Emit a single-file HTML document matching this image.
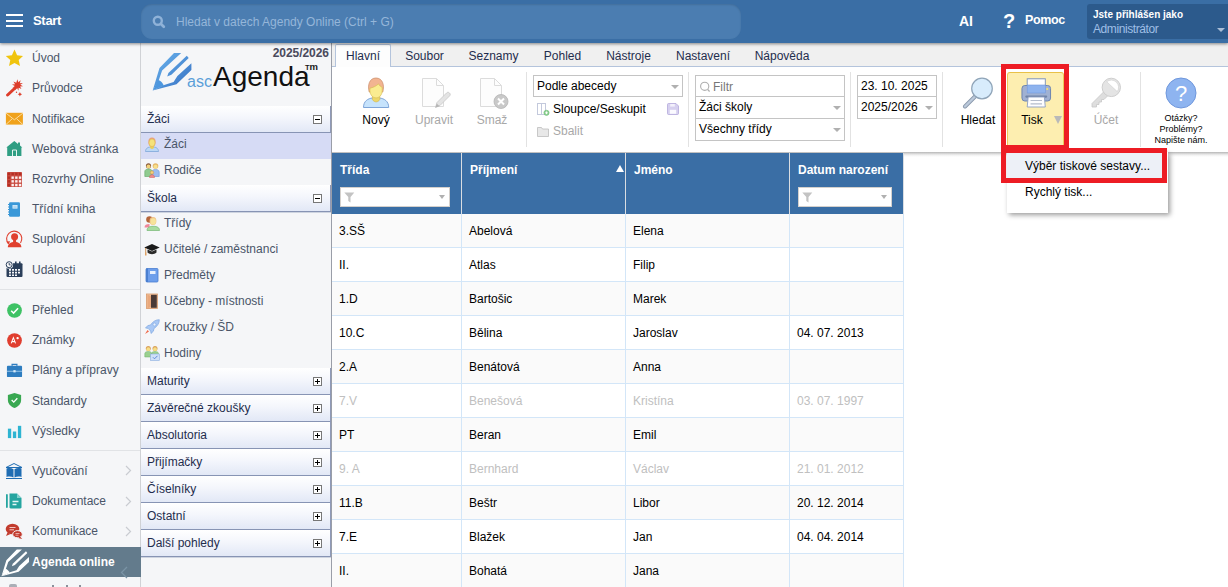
<!DOCTYPE html>
<html><head><meta charset="utf-8">
<style>
*{box-sizing:border-box;margin:0;padding:0}
html,body{width:1228px;height:587px;overflow:hidden;background:#fff;font-family:"Liberation Sans",sans-serif;}
body{position:relative}
.abs{position:absolute}
#top{position:absolute;left:0;top:0;width:1228px;height:43px;background:#3a6ea5;z-index:20;box-shadow:0 1px 3px rgba(0,0,0,.45)}
#top .start{position:absolute;left:33px;top:13px;color:#fff;font-size:13px;font-weight:bold;letter-spacing:-0.3px}
#top .ham{position:absolute;left:6px;top:14px;width:17px;height:13px}
#top .ham i{display:block;height:2px;background:#fff;margin-bottom:3.5px}
#search{position:absolute;left:141px;top:4px;width:600px;height:35px;border-radius:11px;background:#4b7db1;box-shadow:inset 0 1px 2px rgba(0,0,0,.12)}
#search span{position:absolute;left:35px;top:11px;font-size:12px;color:#95b6d9;white-space:nowrap}
#user{position:absolute;left:1087px;top:4px;width:141px;height:35px;background:#2c5a8c;border-radius:3px 0 0 3px}
#side{position:absolute;left:0;top:43px;width:140px;height:544px;background:#f5f6f8}
#side .it{position:absolute;left:32px;font-size:12px;color:#4a5568;white-space:nowrap}
#side .sep{position:absolute;left:0;width:140px;height:1px;background:#e1e3e6}
#nav{position:absolute;left:140px;top:43px;width:192px;height:544px;background:#f5f6f8;border-left:1px solid #d0d2d6;border-right:1px solid #9a9ea8}
.sec{position:absolute;left:0;width:190px;height:27px;background:linear-gradient(#ffffff,#f4f6fc 45%,#e2e8f6);border-bottom:1px solid #8794b4;border-right:1px solid #8f9ab8;box-shadow:0 1px 0 rgba(135,148,180,.35);font-size:12px;color:#1f2d4d;padding:6px 0 0 6px}
.sec b{position:absolute;right:8px;top:9px;width:9px;height:9px;border:1px solid #777;background:#fff}
.sec b:before{content:"";position:absolute;left:1px;top:3px;width:5px;height:1px;background:#000}
.sec b.p:after{content:"";position:absolute;left:3px;top:1px;width:1px;height:5px;background:#000}
.ni{position:absolute;left:0;width:190px;height:26px;font-size:12px;color:#4a5568;padding:4px 0 0 23px;white-space:nowrap}
#side .ic{position:absolute;left:5px;width:18px;height:18px}
#side .chev{position:absolute;left:125px}
#side .act{position:absolute;left:0;top:504px;width:141px;z-index:5;height:29.500px;background:#637b8c}
#side .act span{position:absolute;left:32px;top:8px;font-size:12px;font-weight:bold;color:#fff;white-space:nowrap}
.ni.sel{background:#d6dbf5}
.nic{position:absolute;left:3px;top:3px;width:16px;height:16px}
#nav .yr{position:absolute;right:2px;top:3px;font-size:12px;font-weight:bold;color:#4a4a5c;letter-spacing:-0.05px}
#nav .logo{position:absolute;left:7px;top:5px}
#nav .asc{position:absolute;left:46px;top:30px;font-size:16px;color:#5b9fd8}
#nav .agenda{position:absolute;left:72px;top:18px;font-size:28px;color:#111}
#nav .tm{position:absolute;left:164px;top:18px;font-size:9px;font-weight:bold;color:#1a1a1a;letter-spacing:0;line-height:12px;white-space:nowrap}
#main{position:absolute;left:332px;top:43px;width:896px;height:544px;background:#fff}
#tabs{position:absolute;left:0;top:0;width:896px;height:24px;background:#f0f0f0;border-bottom:1px solid #b4c4dc}
.tab{position:absolute;top:1px;height:23px;text-align:center;font-size:12px;color:#1f2d4d;padding-top:5px}
.tab.act{background:#fdfdfd;border:1px solid #b4c4dc;border-bottom:none;height:24px;padding-top:4px;border-radius:2px 2px 0 0}
#rib{position:absolute;left:0;top:24px;width:896px;height:85px;background:#fff}
#ribsh{position:absolute;left:0;top:109px;width:896px;height:5px;background:linear-gradient(#b6b6b6,#cdcdcd 22%,#e4e4e4 45%,#f4f4f4 70%,#fff)}
.bb{position:absolute;top:0;width:60px;height:84px}
.bb svg{position:absolute}
.bb span{position:absolute;left:0;width:60px;top:46px;text-align:center;font-size:12px}
.vs{position:absolute;top:5px;width:1px;height:75px;background:#e2e2e2}
.box{position:absolute;border:1px solid #c4c4c4;background:#fff}
.box .t{position:absolute;left:3px;top:3px;font-size:12px;color:#000;white-space:nowrap}
.box .dd{position:absolute;right:3px;top:9px;width:0;height:0;border-left:4px solid transparent;border-right:4px solid transparent;border-top:4px solid #b0b0b0}
.lt{position:absolute;font-size:12px;white-space:nowrap}
.tisk{position:absolute;width:57px;height:76px;background:#fdeeb0;border:1px solid #ecca5c;border-top-color:#e9c148;border-radius:3px}
.help{position:absolute;width:80px;text-align:center;font-size:9px;line-height:11px;color:#000}
#th{position:absolute;left:0;top:110px;width:572px;height:61px;background:#3a6ea5}
.hc{position:absolute;top:0;height:61px;border-right:1px solid #d9dde2}
.hc span{position:absolute;left:8px;top:10px;font-size:12px;font-weight:bold;color:#fff;white-space:nowrap}
.fi{position:absolute;top:34px;height:20px;background:#fff;border:1px solid #d4d0cc}
.sa{position:absolute;left:284px;top:12px;width:0;height:0;border-left:4px solid transparent;border-right:4px solid transparent;border-bottom:7px solid #fff}
.tr{position:absolute;left:0;width:572px;height:34px;border-bottom:1px solid #d3e6f8;background:#fff}
.tr.alt{background:#fafafa}
.td{position:absolute;top:0;height:33px;border-right:1px solid #d3e6f8;font-size:12px;color:#000;padding:10px 0 0 7px;white-space:nowrap}
.tr.g .td{color:#c0c0c0}
#menu{position:absolute;left:675px;top:109px;width:161px;height:61px;background:#fff;box-shadow:2px 2px 5px rgba(0,0,0,.4)}
.mi{position:absolute;left:0;width:160px;height:26px;font-size:12px;color:#000;padding:6px 0 0 18px;white-space:nowrap}
.mi.hl{top:1px;background:#edf0f7}
.mi:not(.hl){top:27px}
.red{position:absolute;border:5px solid #ed1c24}
.tb{position:absolute;color:#fff;font-weight:bold;white-space:nowrap}
#user .u1{position:absolute;left:6px;top:5px;font-size:10px;font-weight:bold;color:#fff;white-space:nowrap}
#user .u2{position:absolute;left:6px;top:18px;font-size:12px;color:#9fbfe6;white-space:nowrap;letter-spacing:-0.42px}
#user i{position:absolute;left:130px;top:24px;width:0;height:0;border-left:4px solid transparent;border-right:4px solid transparent;border-top:4px solid #a9bdd6}
</style></head><body>
<div id="top">
  <div class="ham"><i></i><i></i><i></i></div>
  <div class="start">Start</div>
  <div id="search"><span>Hledat v datech Agendy Online (Ctrl + G)</span></div>
  <svg style="position:absolute;left:152px;top:15px" width="14" height="14" viewBox="0 0 14 14"><circle cx="5.800" cy="5.800" r="4" fill="none" stroke="#8fb2d8" stroke-width="2.400"/><path d="M9 9l2.800 2.800" stroke="#8fb2d8" stroke-width="2.700" stroke-linecap="round"/></svg>
  <div class="tb" style="left:959px;top:13px;font-size:14px">AI</div>
  <div class="tb" style="left:1003px;top:10px;font-size:20px">?</div>
  <div class="tb" style="left:1025px;top:13px;font-size:12.5px;letter-spacing:-0.35px">Pomoc</div>
  <div id="user"><div class="u1">Jste přihlášen jako</div><div class="u2">Administrátor</div><i></i></div>
</div>
<div id="side">
<div class="ic" style="left:5px;top:6px"><svg width="18" height="18" viewBox="0 0 18 18"><path d="M9.500 .6l2.600 5.600 6.100.7-4.500 4.100 1.300 6L9.500 14 4 17l1.300-6L.8 6.900l6.100-.7z" fill="#f0c40e"/></svg></div><div class="it" style="top:7.5px">Úvod</div>
<div class="ic" style="left:5px;top:36px"><svg width="18" height="18" viewBox="0 0 18 18"><path d="M2.600 16l7.500-7" stroke="#dd3d2b" stroke-width="3" stroke-linecap="round"/><path d="M12.300 .3l1 3 2.400-2-.9 3 3.100-.3-2.600 1.800 2.800 1.400-3.100.2 1.500 2.700-2.800-1.400-.3 3.100-1.300-2.800-2 2.300.4-3.100-3 .800 2.300-2.100-2.800-1.300 3.100-.4-1.700-2.600 2.900 1.100z" fill="#dd3d2b"/><path d="M14.900 13l.7 1.500 1.500.7-1.500.7-.7 1.500-.7-1.500-1.500-.7 1.500-.7z" fill="#dd3d2b"/><circle cx="11.500" cy="13.200" r=".7" fill="#dd3d2b"/></svg></div><div class="it" style="top:37.7px">Průvodce</div>
<div class="ic" style="left:5px;top:66px"><svg width="18" height="18" viewBox="0 0 18 18"><rect x=".9" y="3.800" width="17" height="11.800" fill="#f0a21c"/><path d="M.9 4.100L9.400 10.800l8.500-6.700M.9 15.600l6.200-5.800M17.900 15.600l-6.200-5.800" stroke="#fbe3b0" stroke-width=".9" fill="none"/></svg></div><div class="it" style="top:69.2px">Notifikace</div>
<div class="ic" style="left:5px;top:96px"><svg width="18" height="18" viewBox="0 0 18 18"><path d="M9.300 2L1.300 8.600h.9V17h14.200V8.600h.9L15 6.600V3.500h-2v1.400z" fill="#2f9e83"/><path d="M7.500 17v-6h4v6" fill="none" stroke="#e6f4f0" stroke-width="1"/></svg></div><div class="it" style="top:99.4px">Webová stránka</div>
<div class="ic" style="left:5px;top:127px"><svg width="18" height="18" viewBox="0 0 18 18"><rect x="2" y="2" width="15" height="15" rx=".8" fill="#c84c42"/><rect x="2.75" y="2.75" width="2.400" height="2.400" fill="#b52f24"/><rect x="6.45" y="2.75" width="2.400" height="2.400" fill="#b52f24"/><rect x="10.15" y="2.75" width="2.400" height="2.400" fill="#b52f24"/><rect x="13.85" y="2.75" width="2.400" height="2.400" fill="#b52f24"/><rect x="2.75" y="6.45" width="2.400" height="2.400" fill="#b52f24"/><rect x="6.45" y="6.45" width="2.400" height="2.400" fill="#fdf1f0"/><rect x="10.15" y="6.45" width="2.400" height="2.400" fill="#fdf1f0"/><rect x="13.85" y="6.45" width="2.400" height="2.400" fill="#fdf1f0"/><rect x="2.75" y="10.15" width="2.400" height="2.400" fill="#b52f24"/><rect x="6.45" y="10.15" width="2.400" height="2.400" fill="#fdf1f0"/><rect x="10.15" y="10.15" width="2.400" height="2.400" fill="#fdf1f0"/><rect x="13.85" y="10.15" width="2.400" height="2.400" fill="#fdf1f0"/><rect x="2.75" y="13.85" width="2.400" height="2.400" fill="#b52f24"/><rect x="6.45" y="13.85" width="2.400" height="2.400" fill="#fdf1f0"/><rect x="10.15" y="13.85" width="2.400" height="2.400" fill="#fdf1f0"/><rect x="13.85" y="13.85" width="2.400" height="2.400" fill="#fdf1f0"/></svg></div><div class="it" style="top:128.6px">Rozvrhy Online</div>
<div class="ic" style="left:5px;top:158px"><svg width="18" height="18" viewBox="0 0 18 18"><rect x="4" y="1.300" width="11" height="14.500" rx="1.200" fill="#3a98d8"/><rect x="7.500" y="4" width="5" height="3.600" fill="#d9edfa"/><path d="M8.300 5.200h3.400M8.300 6.400h3.400" stroke="#8cc3ea" stroke-width=".6"/><path d="M3 3.500h1.800M3 6h1.800M3 8.500h1.800M3 11h1.800M3 13.500h1.800" stroke="#3a98d8" stroke-width="1"/></svg></div><div class="it" style="top:158.6px">Třídní kniha</div>
<div class="ic" style="left:5px;top:187px"><svg width="18" height="18" viewBox="0 0 18 18"><path d="M3.300 13.500A7.600 7.600 0 1 1 15.500 13" fill="none" stroke="#e0402f" stroke-width="1.100"/><path d="M1.200 11.500l2.300 3 1.600-3.300z" fill="#e0402f"/><circle cx="9.600" cy="6.800" r="3.500" fill="#e0402f"/><path d="M2.800 17.200c.3-3.800 2.800-5.200 6.800-5.200s6.500 1.400 6.800 5.200z" fill="#e0402f"/><rect x="8.100" y="9.500" width="3" height="3.500" fill="#e0402f"/></svg></div><div class="it" style="top:188.8px">Suplování</div>
<div class="ic" style="left:5px;top:217px"><svg width="18" height="18" viewBox="0 0 18 18"><rect x="1.500" y="3.300" width="16" height="13.700" rx="1" fill="#2b3f5a"/><rect x="10" y="1.500" width="1.600" height="3.500" fill="#2b3f5a"/><rect x="14" y="1.500" width="1.600" height="3.500" fill="#2b3f5a"/><path d="M4 9h2v1.800H4zM7 9h2v1.800H7zM10 9h2v1.800h-2zM13 9h2v1.800h-2zM4 11.800h2v1.800H4zM7 11.800h2v1.800H7zM10 11.800h2v1.800h-2zM13 11.800h2v1.800h-2zM4 14.600h2v1.500H4zM7 14.600h2v1.500H7zM10 14.600h2v1.500h-2z" fill="#f5f6f8"/><circle cx="4.200" cy="4.700" r="3.900" fill="#f5f6f8"/><circle cx="4.200" cy="4.700" r="3" fill="none" stroke="#2b3f5a" stroke-width="1"/><path d="M4.200 3v1.900h1.400" stroke="#2b3f5a" stroke-width=".9" fill="none"/></svg></div><div class="it" style="top:220.0px">Události</div>
<div class="ic" style="left:6px;top:258.5px"><svg width="17" height="17" viewBox="0 0 18 18"><circle cx="9" cy="9" r="7.800" fill="#3ec265"/><path d="M5.500 9.200l2.500 2.500 4.800-5" stroke="#fff" stroke-width="1.600" fill="none"/></svg></div><div class="it" style="top:260.3px">Přehled</div>
<div class="ic" style="left:6px;top:289px"><svg width="17" height="17" viewBox="0 0 18 18"><circle cx="9" cy="9" r="7.800" fill="#e03e2f"/><path d="M5.500 12l2.300-6 2.300 6M6.300 10.200h3M11 6.500h2.600M12.300 5.200v2.600" stroke="#fff" stroke-width="1.100" fill="none"/></svg></div><div class="it" style="top:289.5px">Známky</div>
<div class="ic" style="left:6px;top:319px"><svg width="17" height="17" viewBox="0 0 18 18"><path d="M6.500 4V2.500h5V4" stroke="#2e7dc0" stroke-width="1.400" fill="none"/><rect x="1" y="4" width="16" height="12" rx="1" fill="#2e7dc0"/><rect x="1" y="9.300" width="16" height="1" fill="#9cc7ea"/><rect x="7.800" y="8.600" width="2.400" height="2.400" fill="#d8ebf9"/></svg></div><div class="it" style="top:319.7px">Plány a přípravy</div>
<div class="ic" style="left:6px;top:349px"><svg width="17" height="17" viewBox="0 0 18 18"><path d="M9 1l7 2.300v5.200c0 4-3 7-7 8.500-4-1.500-7-4.500-7-8.500V3.300z" fill="#39a852"/><path d="M6 8.500l2.200 2.200 3.800-4" stroke="#fff" stroke-width="1.400" fill="none"/></svg></div><div class="it" style="top:351.2px">Standardy</div>
<div class="ic" style="left:6px;top:379.5px"><svg width="17" height="17" viewBox="0 0 18 18"><rect x="2" y="6" width="3.500" height="10" fill="#2db4d2"/><rect x="7.300" y="9" width="3.500" height="7" fill="#2db4d2"/><rect x="12.600" y="3" width="3.500" height="13" fill="#2db4d2"/></svg></div><div class="it" style="top:381.4px">Výsledky</div>
<div class="ic" style="left:5px;top:418.5px"><svg width="18" height="18" viewBox="0 0 18 18"><path d="M9 1.500L1 5.500h16z" fill="none" stroke="#1f6db3" stroke-width="1"/><path d="M1.500 6.500c2.500-.8 5-.6 7 .8v8.200c-2-1.200-4.500-1.400-7-.6zM16.500 6.500c-2.500-.8-5-.6-7 .8v8.200c2-1.200 4.500-1.400 7-.6z" fill="#1f6db3"/><path d="M1 16.500h16" stroke="#1f6db3" stroke-width="1"/></svg></div><div class="it" style="top:421.4px">Vyučování</div>
<div class="ic" style="left:5px;top:449px"><svg width="18" height="18" viewBox="0 0 18 18"><rect x="1" y="2" width="1.800" height="14" rx=".9" fill="#25a5a0"/><path d="M4.500 1.500h7.500l4.500 4.500v9.300c0 .7-.5 1.200-1.200 1.200H5.700c-.7 0-1.200-.5-1.200-1.200z" fill="#25a5a0"/><path d="M7.500 9.500h6M7.500 12.500h4" stroke="#e6f6f5" stroke-width="1.500"/><path d="M12 1.500V6h4.500" fill="#7fd0cc"/></svg></div><div class="it" style="top:450.6px">Dokumentace</div>
<div class="ic" style="left:5px;top:479px"><svg width="18" height="18" viewBox="0 0 18 18"><ellipse cx="7.500" cy="7" rx="6.800" ry="5.300" fill="#c23b2e"/><path d="M2.500 10.500L1 14l4.500-2z" fill="#c23b2e"/><path d="M4.500 5.500h6M4.500 7.800h4.500" stroke="#f3c7c2" stroke-width="1"/><ellipse cx="12.500" cy="12.200" rx="4.800" ry="3.600" fill="#c23b2e" stroke="#f5f6f8" stroke-width="1"/><path d="M15 14.500l2.200 2.500-4-1z" fill="#c23b2e"/><path d="M10.500 11.500h4M10.500 13.200h3" stroke="#f3c7c2" stroke-width=".8"/></svg></div><div class="it" style="top:480.6px">Komunikace</div>
<svg class="chev" style="top:422.4px" width="7" height="11" viewBox="0 0 7 11"><path d="M1 1l4.500 4.500L1 10" stroke="#c9ccd1" stroke-width="1.200" fill="none"/></svg>
<svg class="chev" style="top:452.6px" width="7" height="11" viewBox="0 0 7 11"><path d="M1 1l4.500 4.500L1 10" stroke="#c9ccd1" stroke-width="1.200" fill="none"/></svg>
<svg class="chev" style="top:482.6px" width="7" height="11" viewBox="0 0 7 11"><path d="M1 1l4.500 4.500L1 10" stroke="#c9ccd1" stroke-width="1.200" fill="none"/></svg>
<div class="sep" style="top:246px"></div><div class="sep" style="top:407px"></div>
<div class="act"><svg width="28.700" height="28" viewBox="4 4.500 40 39" style="position:absolute;left:.5px;top:1.500px"><g fill="#fff"><path d="M26 5.100h7.200L14.100 22.600 10.600 32.800 4.700 42.600 11.500 20z"/><path d="M4.700 42.600L28.500 36.200 43.400 22.100V15.300L29.400 28.100 25.600 34.100 15.300 37.200z"/><path d="M4.700 42.600L10.200 31.900c2.500.8 4.600 2.800 5.600 5.600z"/><path d="M38.800 7.700l1.900 2.400L23.400 26.800 19.200 28.500l1.200-3.400z"/></g></svg><span>Agenda online</span>
<svg style="position:absolute;left:120px;top:19px" width="8" height="13" viewBox="0 0 8 13"><path d="M7 1L1.500 6.500 7 12" stroke="#7a93a5" stroke-width="1.300" fill="none"/></svg></div>
<div style="position:absolute;left:9px;top:541px;width:8px;height:3px;background:#8a909a;border-radius:2px 2px 0 0;opacity:.7"></div>
<div style="position:absolute;left:52px;top:542px;width:2px;height:2px;background:#8a909a"></div><div style="position:absolute;left:66px;top:542px;width:2px;height:2px;background:#8a909a"></div><div style="position:absolute;left:79px;top:542px;width:2px;height:2px;background:#8a909a"></div>
</div>
<div id="nav">
<div class="yr">2025/2026</div>
<svg class="logo" width="48" height="48" viewBox="0 0 48 48"><defs><linearGradient id="lg" gradientUnits="userSpaceOnUse" x1="8" y1="8" x2="40" y2="40"><stop offset="0" stop-color="#68b2ec"/><stop offset="1" stop-color="#3872c4"/></linearGradient></defs>
<path d="M26 5.100h7.200L14.100 22.600 10.600 32.800 4.700 42.600 11.500 20z" fill="url(#lg)"/><path d="M4.700 42.600L28.500 36.200 43.400 22.100V15.300L29.400 28.100 25.600 34.100 15.300 37.200z" fill="url(#lg)"/><path d="M4.700 42.600L10.200 31.900c2.500.8 4.600 2.800 5.600 5.600z" fill="#4d97df"/><path d="M38.800 7.700l1.900 2.400L23.400 26.800 19.200 28.500l1.200-3.400z" fill="url(#lg)"/></svg>
<div class="asc">asc</div><div class="agenda">Agenda</div><div class="tm"><span style="font-size:7.500px">T</span><span style="font-size:9.500px">m</span></div>
<div class="sec" style="top:63px">Žáci<b class=""></b></div>
<div class="sec" style="top:142px">Škola<b class=""></b></div>
<div class="sec" style="top:325px">Maturity<b class="p"></b></div>
<div class="sec" style="top:352px">Závěrečné zkoušky<b class="p"></b></div>
<div class="sec" style="top:379px">Absolutoria<b class="p"></b></div>
<div class="sec" style="top:406px">Přijímačky<b class="p"></b></div>
<div class="sec" style="top:433px">Číselníky<b class="p"></b></div>
<div class="sec" style="top:460px">Ostatní<b class="p"></b></div>
<div class="sec" style="top:487px">Další pohledy<b class="p"></b></div>
<div class="ni sel" style="top:90px"><span class="nic"><svg width="16" height="16" viewBox="0 0 16 16"><path d="M1.500 15.500c0-3.200 2.500-4.600 6.500-4.600s6.500 1.400 6.500 4.600z" fill="#bcd8f5" stroke="#7da7d9" stroke-width=".8"/><path d="M6 9.500h4v2.500l-2 1.200-2-1.200z" fill="#e8cf5a"/><ellipse cx="8" cy="6" rx="3.700" ry="4.500" fill="#eba37c"/><ellipse cx="8" cy="6.800" rx="3" ry="3.800" fill="#f5e279" stroke="#d9b64e" stroke-width=".5"/></svg></span>Žáci</div>
<div class="ni" style="top:116px"><span class="nic"><svg width="16" height="16" viewBox="0 0 16 16"><circle cx="4.500" cy="3.800" r="2.600" fill="#8a5a3a"/><circle cx="4.500" cy="4.500" r="2" fill="#f3d27a"/><path d="M.8 14.500V9.500c0-1.600 1.500-2.500 3.700-2.500s3.700.9 3.700 2.500v5z" fill="#8fcb8f" stroke="#5fa667" stroke-width=".6"/><circle cx="11.500" cy="4" r="2.800" fill="#e7b96a"/><circle cx="11.500" cy="4.800" r="2" fill="#f6e08c"/><path d="M8 14.500V10c0-1.700 1.500-2.600 3.500-2.600s3.700.9 3.700 2.600v4.500z" fill="#9bbdf0" stroke="#6d95d6" stroke-width=".6"/><circle cx="8" cy="10.500" r="1.700" fill="#f3d27a" stroke="#c98a4a" stroke-width=".5"/><path d="M5.500 15.500c0-2 1-2.800 2.500-2.800s2.500.8 2.500 2.800z" fill="#ee8b8b" stroke="#cf5b5b" stroke-width=".5"/></svg></span>Rodiče</div>
<div class="ni" style="top:169px"><span class="nic"><svg width="16" height="16" viewBox="0 0 16 16"><circle cx="5.500" cy="4.500" r="3.300" fill="#b5653a"/><path d="M.5 12.500c0-2.600 2-3.500 5-3.500v3.500z" fill="#f0879a"/><ellipse cx="9" cy="6" rx="3.400" ry="4" fill="#f0c387"/><ellipse cx="9.200" cy="6.500" rx="2.700" ry="3.300" fill="#f7e39a"/><path d="M3 15.500c0-3 2.300-4.200 6.200-4.200s6.300 1.200 6.300 4.200z" fill="#a9dca0" stroke="#74b873" stroke-width=".7"/></svg></span>Třídy</div>
<div class="ni" style="top:195px"><span class="nic"><svg width="16" height="16" viewBox="0 0 16 16"><path d="M8 3L.3 6.500 8 10l7.700-3.500z" fill="#1a1a1a"/><path d="M3.500 8.500v3c1.200 1.200 2.800 1.700 4.500 1.700s3.300-.5 4.500-1.700v-3L8 10.600z" fill="#2a2a2a"/><path d="M1.700 7v5" stroke="#c98a4a" stroke-width=".9"/><rect x="1" y="11.500" width="1.500" height="3" fill="#e0a060"/></svg></span>Učitelé / zaměstnanci</div>
<div class="ni" style="top:221px"><span class="nic"><svg width="16" height="16" viewBox="0 0 16 16"><rect x="2" y="1.500" width="12" height="13.500" rx="1" fill="#6d9eeb" stroke="#4a7fd0" stroke-width=".8"/><rect x="2" y="1.500" width="2" height="13.500" fill="#4a7fd0"/><rect x="6" y="4" width="5.500" height="3" fill="#e8f0fd"/></svg></span>Předměty</div>
<div class="ni" style="top:247px"><span class="nic"><svg width="16" height="16" viewBox="0 0 16 16"><rect x="2.500" y="1" width="11" height="14.500" fill="#f4c9a3" stroke="#d99a6c" stroke-width=".8"/><rect x="7" y="1.800" width="5.800" height="13" fill="#4a3a36"/><path d="M3.300 1.800L7 2.800v11.400l-3.700 1z" fill="#e9a87c"/></svg></span>Učebny - místnosti</div>
<div class="ni" style="top:273px"><span class="nic"><svg width="16" height="16" viewBox="0 0 16 16"><path d="M15.300 .7c-3.500 0-6.500 1.800-8.800 5.300l-2.700.6L1.500 9l2.500.3 2.700 2.700.3 2.500 2.400-2.300.6-2.700c3.500-2.300 5.300-5.300 5.300-8.800z" fill="#a9c8f5" stroke="#7ea6e0" stroke-width=".7"/><circle cx="10.500" cy="5.500" r="1.500" fill="#e8f1fd" stroke="#7ea6e0" stroke-width=".6"/><path d="M3.500 11L1 15l4-2.500z" fill="#f06a4a"/></svg></span>Kroužky / ŠD</div>
<div class="ni" style="top:299px"><span class="nic"><svg width="16" height="16" viewBox="0 0 16 16"><circle cx="4.300" cy="3.500" r="2.500" fill="#d9a05a"/><circle cx="4.300" cy="4.200" r="1.900" fill="#f6de86"/><circle cx="11" cy="3.500" r="2.500" fill="#d9a05a"/><circle cx="11" cy="4.200" r="1.900" fill="#f6de86"/><path d="M.8 12V8.500C.8 7.200 2.300 6.500 4.300 6.500s3.400.7 3.400 2V12zM7.700 12V8.500c0-1.300 1.400-2 3.300-2s3.500.7 3.500 2V12z" fill="#9ad08f" stroke="#6aae68" stroke-width=".5"/><rect x="6.500" y="9" width="9" height="6.500" fill="#cfe0f8" stroke="#8aaee0" stroke-width=".6"/><path d="M9 12.300l1.500 1.500 3-3" stroke="#5b8ad6" stroke-width="1" fill="none"/></svg></span>Hodiny</div>
</div>
<div id="main">
<div id="tabs"><div class="tab act" style="left:3px;width:56px">Hlavní</div><div class="tab" style="left:52.5px;width:80px">Soubor</div><div class="tab" style="left:121.5px;width:80px">Seznamy</div><div class="tab" style="left:190.5px;width:80px">Pohled</div><div class="tab" style="left:256.5px;width:80px">Nástroje</div><div class="tab" style="left:331px;width:80px">Nastavení</div><div class="tab" style="left:410px;width:80px">Nápověda</div></div>
<div id="rib">
<div class="bb" style="left:14px">
<svg width="28" height="32" viewBox="0 0 28 32" style="left:16px;top:10px"><path d="M1.500 30.500C1.500 24 6 21.500 10.500 21h7c4.500.5 9.200 3 9.200 9.500z" fill="#c6e3fc" stroke="#7ea5d8" stroke-width="1"/><path d="M10.400 17.500h7.400v5c-1 1.800-2.500 2.400-3.700 2.400s-2.700-.6-3.700-2.400z" fill="#ecd768" stroke="#d4b64e" stroke-width=".6"/><path d="M7.200 15C5.300 8 7.500 1 14 1s8.700 7 6.800 14z" fill="#f2b491" stroke="#c98a64" stroke-width=".7"/><path d="M7.900 11.200c3-.6 6-2 8.700-4.300.8 1.800 2.300 2.900 3.600 3.300v3.500c0 4-2.800 7.200-6.100 7.200S7.900 17.700 7.900 13.700z" fill="#faec90" stroke="#d8be55" stroke-width=".7"/></svg>
<span style="color:#000">Nový</span></div>
<div class="bb" style="left:72px">
<svg width="30" height="32" viewBox="0 0 30 32" style="left:17px;top:10px"><path d="M1.500 1.500h14l7 7V29.500h-21z" fill="#fdfdfd" stroke="#dcdcdc" stroke-width="1"/><path d="M15.500 1.500v7h7" fill="none" stroke="#dcdcdc" stroke-width="1"/><path d="M14.500 30.500l1.500-5L25.500 16c1-1 2-1 3 0s1 2 0 3L19 28.500z" fill="#e4e4e4" stroke="#c6c6c6" stroke-width=".8"/><path d="M14.500 30.500l1.200-4 2.800 2.800z" fill="#b5b5b5"/></svg>
<span style="color:#a8a8a8">Upravit</span></div>
<div class="bb" style="left:130px">
<svg width="30" height="32" viewBox="0 0 30 32" style="left:17px;top:10px"><path d="M1.500 1.500h14l7 7V29.500h-21z" fill="#fdfdfd" stroke="#dcdcdc" stroke-width="1"/><path d="M15.500 1.500v7h7" fill="none" stroke="#dcdcdc" stroke-width="1"/><circle cx="22" cy="24.500" r="7" fill="#c9c9c9" stroke="#b5b5b5" stroke-width=".8"/><path d="M19 21.500l6 6M25 21.500l-6 6" stroke="#fff" stroke-width="2"/></svg>
<span style="color:#a8a8a8">Smaž</span></div>
<div class="vs" style="left:194px"></div><div class="vs" style="left:356px"></div><div class="vs" style="left:518px"></div><div class="vs" style="left:610px"></div><div class="vs" style="left:808px"></div>
<div class="box" style="left:201px;top:8px;width:150px;height:22px"><span class="t">Podle abecedy</span><i class="dd"></i></div>
<svg style="position:absolute;left:205px;top:36px" width="13" height="13" viewBox="0 0 13 13"><rect x=".5" y=".5" width="4" height="11" fill="#fff" stroke="#c3c9dc"/><rect x="4.500" y=".5" width="4" height="11" fill="#fff" stroke="#c3c9dc"/><circle cx="9.500" cy="9.800" r="2.600" fill="#8fd193" stroke="#6cbb73" stroke-width=".6"/><path d="M8.200 9.800h2.600M9.500 8.500v2.600" stroke="#fff" stroke-width=".9"/></svg>
<div class="lt" style="left:221px;top:35px;color:#000">Sloupce/Seskupit</div>
<svg style="position:absolute;left:335px;top:36px" width="12" height="12" viewBox="0 0 12 12"><path d="M.5 1.500c0-.6.400-1 1-1h7.500l2.500 2.500v7.500c0 .6-.4 1-1 1h-9c-.6 0-1-.4-1-1z" fill="#d6d0ef" stroke="#b4aada" stroke-width=".8"/><rect x="3.200" y="1" width="4.600" height="2.600" fill="#f3f1fb"/><rect x="2.800" y="6.800" width="6.400" height="4" fill="#fbfaff"/></svg>
<svg style="position:absolute;left:205px;top:59px" width="12" height="11" viewBox="0 0 12 11"><path d="M.5 1.500h4l1 1.500h6v7.500h-11z" fill="#e8e8e8" stroke="#bdbdbd" stroke-width=".8"/></svg>
<div class="lt" style="left:221px;top:57px;color:#a8a8a8">Sbalit</div>
<div class="box" style="left:363px;top:8px;width:150px;height:22px"><svg style="position:absolute;left:3px;top:5px" width="13" height="13" viewBox="0 0 13 13"><circle cx="5.700" cy="5.300" r="4.100" fill="none" stroke="#aeaeae" stroke-width="1.100"/><path d="M8.700 8.500l1.900 2" stroke="#aeaeae" stroke-width="1.200"/></svg><span class="t" style="left:17px;top:4px;color:#777">Filtr</span></div>
<div class="box" style="left:363px;top:29px;width:150px;height:23px"><span class="t">Žáci školy</span><i class="dd"></i></div>
<div class="box" style="left:363px;top:51px;width:150px;height:23px"><span class="t">Všechny třídy</span><i class="dd"></i></div>
<div class="box" style="left:525px;top:8px;width:80px;height:22px"><span class="t">23. 10. 2025</span></div>
<div class="box" style="left:525px;top:29px;width:80px;height:23px"><span class="t">2025/2026</span><i class="dd"></i></div>
<div class="bb" style="left:616px">
<svg width="32" height="32" viewBox="0 0 32 32" style="left:14px;top:10px"><path d="M13 19.500L3 29.500" stroke="#8796aa" stroke-width="4" stroke-linecap="round"/><path d="M13 19.500L3 29.500" stroke="#bccadb" stroke-width="2.400" stroke-linecap="round"/><circle cx="20" cy="11.500" r="10.300" fill="#d8ecfc" stroke="#8fa4b8" stroke-width="1.200"/></svg>
<span style="color:#000">Hledat</span></div>
<div class="tisk" style="left:675px;top:5px"></div>
<div class="bb" style="left:670px">
<svg width="30.500" height="30" viewBox="0 0 32 30" preserveAspectRatio="none" style="left:19px;top:11px"><rect x="6.500" y=".8" width="19" height="10" fill="#fff" stroke="#7d93ba" stroke-width="1"/><rect x="1" y="7.500" width="30" height="15.500" rx="3" fill="#a0b1d2" stroke="#6c84b0" stroke-width="1"/><rect x="6.500" y="7" width="19" height="8" fill="#8eb3ee" stroke="#7399dd" stroke-width=".6"/><circle cx="27.500" cy="11" r="1.100" fill="#f6e36c"/><rect x="4.500" y="17.500" width="23" height="2.200" rx="1.100" fill="#6f83a8"/><path d="M7.500 19h17l1 10h-19z" fill="#fdfdff" stroke="#8a9cc0" stroke-width=".9"/><path d="M10 22.500h12M10 25.800h12" stroke="#b4bccc" stroke-width="1.200"/></svg>
<span style="color:#000">Tisk</span></div>
<div style="position:absolute;left:722px;top:49px;width:0;height:0;border-left:4.500px solid transparent;border-right:4.500px solid transparent;border-top:8px solid #b9b9b9"></div>
<div class="bb" style="left:744px">
<svg width="32" height="32" viewBox="0 0 32 32" style="left:14px;top:10px"><path d="M14.500 14L2 26.500v3.500h4.500v-2.500H9V25h2.500v-2.500h2.500l4-4z" fill="#dedede" stroke="#c6c6c6" stroke-width=".8"/><circle cx="21.300" cy="10.400" r="9.200" fill="#e4e4e4" stroke="#cacaca" stroke-width=".9"/><path d="M16.710 4.720A7.300 7.300 0 0 1 27.250 14.620z" fill="#fff" stroke="#cfcfcf" stroke-width=".6"/></svg>
<span style="color:#a8a8a8">Účet</span></div>
<svg style="position:absolute;left:833px;top:10px" width="32" height="32" viewBox="0 0 32 32"><circle cx="16" cy="16" r="15" fill="#8eb4f0" stroke="#6f97dc" stroke-width="1"/><text x="16" y="23.500" font-family="Liberation Sans" font-size="22" fill="#fff" text-anchor="middle">?</text></svg>
<div class="help" style="left:809px;top:46px">Otázky?<br>Problémy?<br>Napište nám.</div>
</div>
<div id="ribsh"></div><div id="th"><div class="hc" style="left:0px;width:130px"><span>Třída</span></div><div class="hc" style="left:130px;width:164px"><span>Příjmení</span></div><div class="hc" style="left:294px;width:164px"><span>Jméno</span></div><div class="hc" style="left:458px;width:114px"><span>Datum narození</span></div><div class="fi" style="left:8px;width:110px"><svg style="position:absolute;left:3px;top:4px" width="11" height="11" viewBox="0 0 11 11"><path d="M.3 .5h10L6.500 5v5.500L4.300 9V5z" fill="#c3c3c3"/></svg><i style="position:absolute;right:4px;top:7px;width:0;height:0;border-left:3.500px solid transparent;border-right:3.500px solid transparent;border-top:4px solid #b0b0b0"></i></div><div class="fi" style="left:466px;width:94px"><svg style="position:absolute;left:3px;top:4px" width="11" height="11" viewBox="0 0 11 11"><path d="M.3 .5h10L6.500 5v5.500L4.300 9V5z" fill="#c3c3c3"/></svg><i style="position:absolute;right:4px;top:7px;width:0;height:0;border-left:3.500px solid transparent;border-right:3.500px solid transparent;border-top:4px solid #b0b0b0"></i></div><div class="sa"></div></div>
<div class="tr alt" style="top:171px"><div class="td" style="left:0px;width:130px">3.SŠ</div><div class="td" style="left:130px;width:164px">Abelová</div><div class="td" style="left:294px;width:164px">Elena</div><div class="td" style="left:458px;width:114px"></div></div>
<div class="tr" style="top:205px"><div class="td" style="left:0px;width:130px">II.</div><div class="td" style="left:130px;width:164px">Atlas</div><div class="td" style="left:294px;width:164px">Filip</div><div class="td" style="left:458px;width:114px"></div></div>
<div class="tr alt" style="top:239px"><div class="td" style="left:0px;width:130px">1.D</div><div class="td" style="left:130px;width:164px">Bartošic</div><div class="td" style="left:294px;width:164px">Marek</div><div class="td" style="left:458px;width:114px"></div></div>
<div class="tr" style="top:273px"><div class="td" style="left:0px;width:130px">10.C</div><div class="td" style="left:130px;width:164px">Bělina</div><div class="td" style="left:294px;width:164px">Jaroslav</div><div class="td" style="left:458px;width:114px">04. 07. 2013</div></div>
<div class="tr alt" style="top:307px"><div class="td" style="left:0px;width:130px">2.A</div><div class="td" style="left:130px;width:164px">Benátová</div><div class="td" style="left:294px;width:164px">Anna</div><div class="td" style="left:458px;width:114px"></div></div>
<div class="tr g" style="top:341px"><div class="td" style="left:0px;width:130px">7.V</div><div class="td" style="left:130px;width:164px">Benešová</div><div class="td" style="left:294px;width:164px">Kristína</div><div class="td" style="left:458px;width:114px">03. 07. 1997</div></div>
<div class="tr alt" style="top:375px"><div class="td" style="left:0px;width:130px">PT</div><div class="td" style="left:130px;width:164px">Beran</div><div class="td" style="left:294px;width:164px">Emil</div><div class="td" style="left:458px;width:114px"></div></div>
<div class="tr g" style="top:409px"><div class="td" style="left:0px;width:130px">9. A</div><div class="td" style="left:130px;width:164px">Bernhard</div><div class="td" style="left:294px;width:164px">Václav</div><div class="td" style="left:458px;width:114px">21. 01. 2012</div></div>
<div class="tr alt" style="top:443px"><div class="td" style="left:0px;width:130px">11.B</div><div class="td" style="left:130px;width:164px">Beštr</div><div class="td" style="left:294px;width:164px">Libor</div><div class="td" style="left:458px;width:114px">20. 12. 2014</div></div>
<div class="tr" style="top:477px"><div class="td" style="left:0px;width:130px">7.E</div><div class="td" style="left:130px;width:164px">Blažek</div><div class="td" style="left:294px;width:164px">Jan</div><div class="td" style="left:458px;width:114px">04. 04. 2014</div></div>
<div class="tr alt" style="top:511px"><div class="td" style="left:0px;width:130px">II.</div><div class="td" style="left:130px;width:164px">Bohatá</div><div class="td" style="left:294px;width:164px">Jana</div><div class="td" style="left:458px;width:114px"></div></div>
<div id="menu"><div class="mi hl">Výběr tiskové sestavy...</div><div class="mi">Rychlý tisk...</div></div>
<div class="red" style="left:669px;top:21px;width:68px;height:86px"></div>
<div class="red" style="left:669px;top:105px;width:166px;height:35px"></div>
</div>
</body></html>
